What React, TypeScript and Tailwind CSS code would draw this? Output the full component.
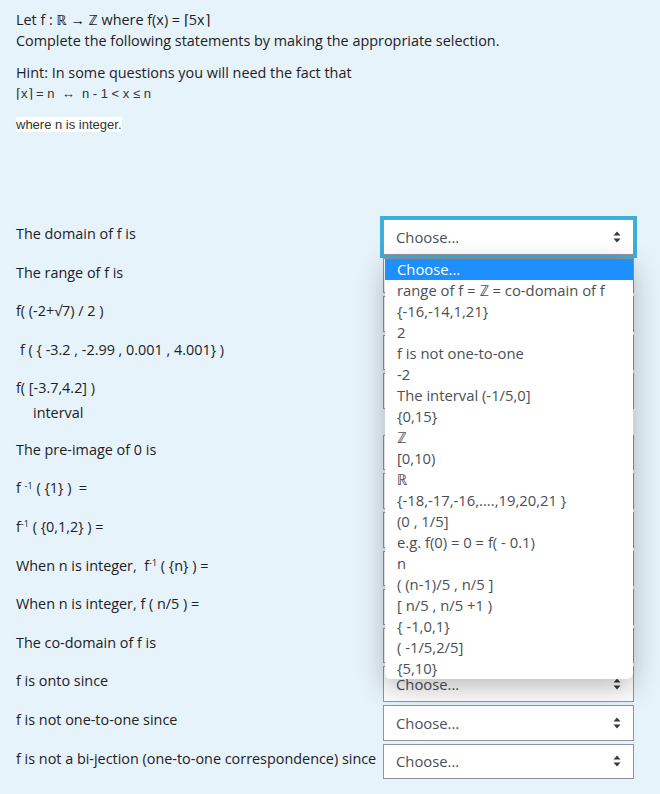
import React from "react";

// Quiz question: choose the matching statement for each row

const ROWS: { label: React.ReactNode; tall?: boolean }[] = [
  { label: "The domain of f is" },
  { label: "The range of f is" },
  { label: "f( (-2+√7) / 2 )" },
  { label: <span className="pl-[4px]">f ( {"{"} -3.2 , -2.99 , 0.001 , 4.001{"}"} )</span> },
  {
    label: (
      <div>
        <div className="h-[25px] leading-[20px]">f( [-3.7,4.2] )</div>
        <div className="pl-[17px] leading-[20px]">interval</div>
      </div>
    ),
    tall: true,
  },
  { label: "The pre-image of 0 is" },
  {
    label: (
      <span>
        f <sup className="text-[9px]">-1</sup> ( {"{1}"} )&nbsp;&nbsp;=
      </span>
    ),
  },
  {
    label: (
      <span>
        f<sup className="text-[9px]">-1</sup> ( {"{0,1,2}"} ) =
      </span>
    ),
  },
  {
    label: (
      <span>
        When n is integer,&nbsp; f<sup className="text-[9px]">-1</sup> ( {"{n}"} ) =
      </span>
    ),
  },
  { label: "When n is integer,  f ( n/5 ) =" },
  { label: "The co-domain of f is" },
  { label: "f is onto since" },
  { label: "f is not one-to-one since" },
  { label: "f is not a bi-jection (one-to-one correspondence) since" },
];

const OPTIONS = [
  "Choose...",
  "range of f = ℤ = co-domain of f",
  "{-16,-14,1,21}",
  "2",
  "f is not one-to-one",
  "-2",
  "The interval (-1/5,0]",
  "{0,15}",
  "ℤ",
  "[0,10)",
  "ℝ",
  "{-18,-17,-16,....,19,20,21 }",
  "(0 , 1/5]",
  "e.g. f(0) = 0 = f( - 0.1)",
  "n",
  "( (n-1)/5 , n/5 ]",
  "[ n/5 , n/5 +1 )",
  "{ -1,0,1}",
  "( -1/5,2/5]",
  "{5,10}",
];

function Arrows() {
  return (
    <svg width="8" height="12" viewBox="0 0 8 12" className="text-[#343a40]">
      <path d="M4 0.5 L7.5 4.5 H0.5 Z" fill="currentColor" />
      <path d="M4 11.5 L7.5 7.5 H0.5 Z" fill="currentColor" />
    </svg>
  );
}

function FakeSelect({ focused, covered }: { focused?: boolean; covered?: boolean }) {
  return (
    <div
      className={
        "relative flex h-[35.6px] w-[251px] shrink-0 items-center justify-between border bg-white pl-[12px] pr-[12px] text-[14.8px] text-[#495057] " +
        (focused
          ? "border-[#8f959e] outline outline-[3px] outline-[#3bafd9]"
          : "border-[#8f959e]")
      }
    >
      <span className={covered ? "invisible" : ""}>Choose...</span>
      <Arrows />
    </div>
  );
}

export default function App() {
  return (
    <div
      className="relative min-h-[794px] w-[660px] bg-[#e7f3fb] text-[#1d2125]"
      style={{ fontFamily: '"Open Sans", "Noto Sans", sans-serif' }}
    >
      <div className="px-4 pt-[9px] text-[14.4px] leading-[21px]">
        <div>Let f : ℝ → ℤ where f(x) = ⌈5x⌉</div>
        <div>Complete the following statements by making the appropriate selection.</div>
        <div className="mt-[11px]">Hint: In some questions you will need the fact that</div>
        <div
          className="text-[13px] text-[#333]"
          style={{ fontFamily: '"Liberation Sans", Arial, sans-serif' }}
        >
          ⌈x⌉ = n&nbsp; ↔ &nbsp;n - 1 &lt; x ≤ n
        </div>
        <div className="mt-[9px]">
          <span
            className="bg-white text-[13px] leading-[17px] text-[#333]"
            style={{ fontFamily: '"Liberation Sans", Arial, sans-serif' }}
          >
            where n is integer.
          </span>
        </div>
      </div>

      <div className="mt-[85px] flex flex-col gap-[3px] pl-4 pr-[26px]">
        {ROWS.map((row, i) => (
          <div
            key={i}
            className={
              "flex items-start justify-between " + (row.tall ? "h-[58.4px]" : "h-[35.6px]")
            }
          >
            <div className="pt-[5px] text-[14.4px] leading-[20px]">{row.label}</div>
            <FakeSelect focused={i === 0} covered={i > 0 && i < 11} />
          </div>
        ))}
      </div>

      {/* open option list of the first select */}
      <div
        className="absolute left-[385px] top-[259px] w-[248px] overflow-hidden rounded-b-[6px] bg-white text-[14.8px] text-[#4a4f55] shadow-[0_8px_28px_rgba(0,0,0,0.28)]"
        style={{ fontFamily: '"Open Sans", "Noto Sans", sans-serif' }}
      >
        {OPTIONS.map((opt, i) => (
          <div
            key={i}
            className={
              "h-[21px] whitespace-pre pl-[12px] leading-[21px] " +
              (i === 0 ? "bg-[#1e8fff] text-white" : "")
            }
          >
            {opt}
          </div>
        ))}
      </div>
    </div>
  );
}
